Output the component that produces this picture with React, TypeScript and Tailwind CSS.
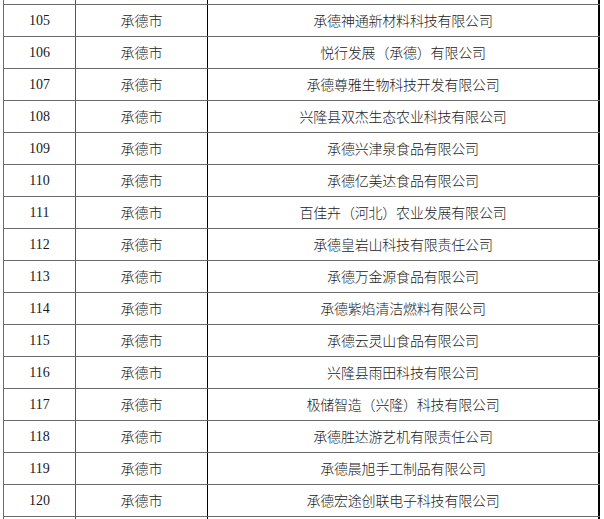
import React from "react";

const rows: [string, string, string][] = [
  ["105", "承德市", "承德神通新材料科技有限公司"],
  ["106", "承德市", "悦行发展（承德）有限公司"],
  ["107", "承德市", "承德尊雅生物科技开发有限公司"],
  ["108", "承德市", "兴隆县双杰生态农业科技有限公司"],
  ["109", "承德市", "承德兴津泉食品有限公司"],
  ["110", "承德市", "承德亿美达食品有限公司"],
  ["111", "承德市", "百佳卉（河北）农业发展有限公司"],
  ["112", "承德市", "承德皇岩山科技有限责任公司"],
  ["113", "承德市", "承德万金源食品有限公司"],
  ["114", "承德市", "承德紫焰清洁燃料有限公司"],
  ["115", "承德市", "承德云灵山食品有限公司"],
  ["116", "承德市", "兴隆县雨田科技有限公司"],
  ["117", "承德市", "极储智造（兴隆）科技有限公司"],
  ["118", "承德市", "承德胜达游艺机有限责任公司"],
  ["119", "承德市", "承德晨旭手工制品有限公司"],
  ["120", "承德市", "承德宏途创联电子科技有限公司"],
];

const cjk = "font-['Noto_Sans_CJK_SC',sans-serif] font-light";

function Row({ a, b, c, h }: { a: string; b: string; c: string; h: string }) {
  return (
    <div className={`flex ${h} border-b border-[#6a6a6a]`}>
      <div className="w-[72px] shrink-0 border-r border-[#555] flex items-center justify-center font-['Liberation_Serif',serif] text-[14px] text-[#1a1a1a]">
        {a}
      </div>
      <div className={`w-[132px] shrink-0 border-r border-black flex items-center justify-center ${cjk} text-[14px] text-[#222]`}>
        {b}
      </div>
      <div className={`w-[392px] shrink-0 border-r-2 border-black flex items-center justify-center ${cjk} text-[14px] tracking-[-0.2px] text-[#222]`}>
        {c}
      </div>
    </div>
  );
}

export default function App() {
  return (
    <div className="w-[604px] h-[519px] overflow-hidden bg-white">
      <div className="ml-[3px] w-[597px] border-l border-[#6a6a6a]">
        <Row a="" b="" c="" h="h-[5px]" />
        {rows.map(([a, b, c]) => (
          <Row key={a} a={a} b={b} c={c} h="h-[32px]" />
        ))}
        <Row a="" b="" c="" h="h-[32px]" />
      </div>
    </div>
  );
}
